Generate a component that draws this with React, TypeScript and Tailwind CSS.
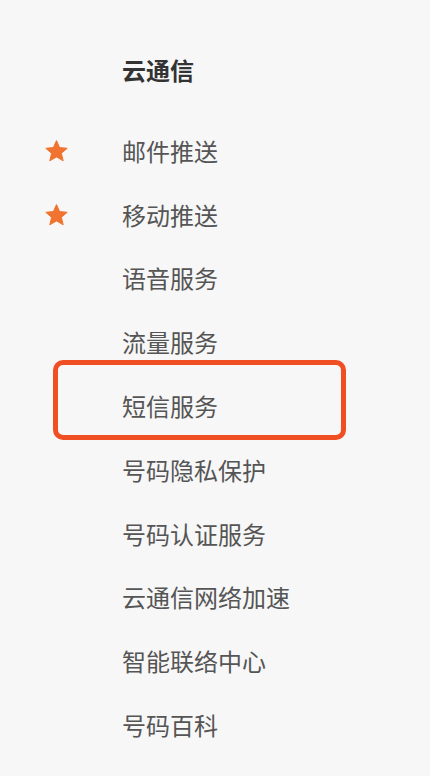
const items = [
  { label: "邮件推送", starred: true },
  { label: "移动推送", starred: true },
  { label: "语音服务" },
  { label: "流量服务" },
  { label: "短信服务", highlighted: true },
  { label: "号码隐私保护" },
  { label: "号码认证服务" },
  { label: "云通信网络加速" },
  { label: "智能联络中心" },
  { label: "号码百科" },
];

function Star() {
  return (
    <svg width="25" height="23" viewBox="0 0 24 23" className="block">
      <path
        d="M12 0.6l3.1 7 7.6 0.7-5.8 5 1.8 7.5L12 16.9l-6.7 3.9 1.8-7.5-5.8-5 7.6-0.7z"
        fill="#f07430"
        stroke="#f07430"
        strokeWidth="1"
        strokeLinejoin="round"
      />
    </svg>
  );
}

export default function App() {
  return (
    <div
      className="min-h-screen w-full overflow-hidden bg-[#f7f7f7] pt-[39px]"
      style={{ fontFamily: '"Noto Sans", "Noto Sans CJK SC", sans-serif' }}
    >
      <div className="flex h-16 items-center pl-[122px] text-[24px] font-bold text-[#333]">
        云通信
      </div>

      <ul className="mt-[17px]">
        {items.map((item) => (
          <li key={item.label} className="relative flex h-[63.8px] items-center">
            <div className="flex w-[122px] shrink-0 items-center pl-[44px]">
              {item.starred && <Star />}
            </div>
            <span className="text-[24px] text-[#555]">{item.label}</span>
            {item.highlighted && (
              <div className="absolute left-[53px] top-[-15px] h-[80px] w-[293px] rounded-[10px] border-[5px] border-[#f04e23]" />
            )}
          </li>
        ))}
      </ul>
    </div>
  );
}
